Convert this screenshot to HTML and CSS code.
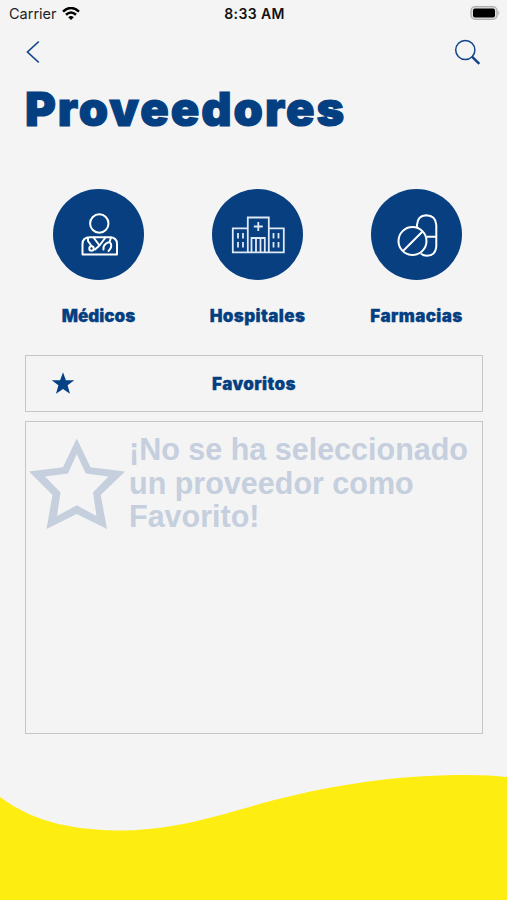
FILE: index.html
```html
<!DOCTYPE html>
<html lang="es">
<head>
<meta charset="utf-8">
<meta name="viewport" content="width=device-width">
<title>Proveedores</title>
<link rel="stylesheet" href="styles.css">
</head>
<body>
<div class="screen">
  <header class="status">
    <div class="carrier"><span>Carrier</span>
      <svg width="18" height="14" viewBox="0 0 18 14"><g fill="none" stroke="#000" stroke-width="2.5"><path d="M1 4.7Q9-2.7 17 4.7"/><path d="M4 7.8Q9 3.3 14 7.8"/></g><path d="M6.2 10.3Q9 7.9 11.8 10.3L9 13.1Z"/></svg>
    </div>
    <time class="time">8:33 AM</time>
    <svg class="battery" width="31" height="15" viewBox="0 0 31 15"><rect x="2" y="0.7" width="26" height="12.600" rx="4" fill="#dedede" stroke="#adadad" stroke-width="1.3"/><rect x="4" y="2.500" width="22" height="9" rx="2"/><path d="M29.300 4.500Q31.300 7 29.300 9.500Z" fill="#adadad"/></svg>
  </header>
  <nav class="nav">
    <svg width="14" height="24" viewBox="0 0 14 24"><path d="M12.8 1.5L1.5 12L12.8 22.5" fill="none" stroke="#12458a" stroke-width="1.7"/></svg>
    <svg width="28" height="28" viewBox="0 0 28 28" fill="none" stroke="#12458a"><circle cx="12.3" cy="12" r="9.6" stroke-width="1.5"/><path d="M19 18.6L26.300 25.8" stroke-width="2.5"/></svg>
  </nav>
  <h1 class="title">Proveedores</h1>
  <section class="categories">
    <a class="category"><span class="disc">
      <svg width="91" height="91" viewBox="0 0 91 91" fill="none" stroke="#fff" stroke-width="2" stroke-linejoin="round" stroke-linecap="round"><circle cx="46.3" cy="34.5" r="9.2"/><path d="M29.500 65.5V55Q29.500 48.3 37 48.3H56.500Q64 48.3 64 55V65.5Z"/><path d="M40.500 48.5L46.500 56.5L52.5 48.5M35 49V52L38.500 57M46.500 56.5L42 60.500M58 48.5L56.5 53M50.5 60.500Q50 57 52.5 55Q56.500 51.500 58 55Q59 58.500 55.5 62"/><circle cx="38.5" cy="59.5" r="2.2"/></svg>
    </span><span class="label medicos">Médicos</span></a>
    <a class="category"><span class="disc">
      <svg width="91" height="91" viewBox="0 0 91 91" fill="none" stroke="#dfe9f5" stroke-width="1.8"><path d="M35.8 63.3V28.5H56.8V63.3M35.8 39.3H20.8V63.3H71.8V39.3H56.8M39.5 63V49H52.8V63M44 63V49M48.5 63V49"/><path d="M46.3 33V42M41.8 37.5H50.8M26 44V49.5M31 44V49.5M26 53V58.5M31 53V58.5M61.5 44V49.5M66.5 44V49.5M61.5 53V58.5M66.5 53V58.5"/></svg>
    </span><span class="label hospitales">Hospitales</span></a>
    <a class="category"><span class="disc">
      <svg width="91" height="91" viewBox="0 0 91 91" fill="none" stroke="#fff" stroke-width="2"><circle cx="41.5" cy="52" r="14"/><path d="M32 62L51.5 42.5M46 38.2V36Q46.5 26.5 55.2 26.2Q64.8 26.5 65.3 36V57.5Q64.5 66.5 56 66.8Q52.5 66.8 50 64.8M55.5 47.8H65.3"/></svg>
    </span><span class="label farmacias">Farmacias</span></a>
  </section>
  <section class="bar">
    <svg width="24" height="23" viewBox="0 0 24 23"><path d="M12 .3L14.9 8.3H23.3L16.6 13.2L19 21.8L12 17L5 21.8L7.4 13.2L.7 8.3H9.1Z" fill="#064185"/></svg>
    <h2 class="bar-title">Favoritos</h2>
  </section>
  <section class="panel">
    <svg class="star" width="96" height="92" viewBox="0 0 96 92"><path fill="#c5cfde" fill-rule="evenodd" d="M47.7 .5L61.5 29.3L96 33.5L71.7 57L78 91L47.7 76L17.5 91L23.5 57L0 33.5L34 29.3ZM47.7 16L39 35.5L16 38.5L31.5 54.5L28 78L47.7 67.3L67.5 78L64 54.5L79.5 38.5L56.8 35.5Z"/></svg>
    <p class="empty">¡No se ha seleccionado<br>un proveedor como<br>Favorito!</p>
  </section>
  <svg class="wave" width="507" height="128" viewBox="0 0 507 128"><path fill="#feed10" d="M0 25C36 52 78 58.500 125 58.500C176 57.500 222 43 263 31C330 13 395 3 468 3Q490 3 507 5V128H0Z"/></svg>
</div>
</body>
</html>
```
FILE: styles.css
```css
* { box-sizing: border-box; margin: 0; padding: 0; }
body { background: #f4f4f4; font-family: Inter, "Liberation Sans", sans-serif; }
svg { display: block; flex: none; }
.screen { width: 507px; height: 900px; display: flex; flex-direction: column; overflow: hidden; }
.status { height: 27px; display: grid; grid-template-columns: 1fr auto 1fr; align-items: center; padding: 0 7px 0 9px; font-size: 14.5px; color: #222; }
.carrier { display: flex; align-items: center; gap: 5px; }
.time { font-weight: 600; font-size: 14px; letter-spacing: .4px; color: #111; }
.battery { justify-self: end; }
.nav { height: 50px; display: flex; justify-content: space-between; align-items: center; padding: 0 26px; }
.title { height: 64px; padding-left: 25px; font-size: 47px; line-height: 64px; font-weight: 900; letter-spacing: 2px; -webkit-text-stroke: 1.2px #043f82; color: #043f82; white-space: nowrap; }
.categories { display: grid; grid-template-columns: repeat(3, 159px); margin: 48px 0 0 19px; height: 166px; flex: none; }
.category { display: flex; flex-direction: column; align-items: center; gap: 25px; }
.disc { width: 91px; height: 91px; border-radius: 50%; background: #073f80; }
.label, .bar-title { font-size: 17px; line-height: 22px; font-weight: 900; letter-spacing: .4px; -webkit-text-stroke: .3px #043f82; color: #043f82; white-space: nowrap; }
.medicos { letter-spacing: 0; }
.bar { margin: 0 24px 0 25px; height: 57px; flex: none; border: 1px solid #c4c6ca; display: grid; grid-template-columns: 1fr auto 1fr; align-items: center; padding: 0 25px; }
.panel { margin: 9px 24px 0 25px; height: 313px; flex: none; border: 1px solid #c4c6ca; display: flex; align-items: flex-start; padding: 16px 0 0 3px; gap: 4px; }
.empty { margin-top: -5px; font-family: "Liberation Sans", sans-serif; font-weight: 700; font-size: 30.5px; line-height: 33.5px; color: #c5cfde; white-space: nowrap; }
.wave { margin-top: auto; }
```
